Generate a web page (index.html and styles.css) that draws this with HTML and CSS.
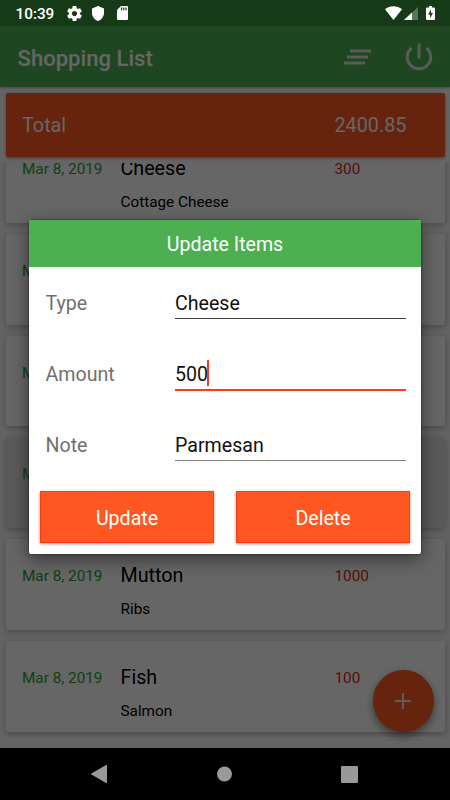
FILE: index.html
```
<!DOCTYPE html>
<html lang="en">
<head>
    <meta charset="UTF-8">
    <meta name="viewport" content="width=device-width, initial-scale=1.0">
    <title>Shopping List</title>
    <link rel="stylesheet" href="styles.css">
</head>
<body>
    <div class="app">
        <div class="status-space"></div>
        <header class="toolbar">
            <h1>Shopping List</h1>
            <svg class="clear-icon" width="28" height="16" viewBox="0 0 28 16" fill="#e2e6e2">
                <path d="M6 0.5h21v3H6zM3 6.500h21v3H3zM0 12.500h21v3H0z"/>
            </svg>
            <svg class="power-icon" width="28" height="28" viewBox="0 0 28 28" fill="none" stroke="#e2e6e2" stroke-width="3">
                <path d="M14 0.5v15"/>
                <path d="M6.600 5A11.700 11.700 0 1 0 21.400 5"/>
            </svg>
        </header>
        <div class="total">
            <span class="total-label">Total</span>
            <span>2400.85</span>
        </div>
        <div class="list">
            <div class="item">
                <span class="date">Mar 8, 2019</span>
                <div class="info"><div class="name">Cheese</div><div class="note">Cottage Cheese</div></div>
                <span class="amount">300</span>
            </div>
            <!-- These rows are mostly behind the dialog -->
            <div class="item"><span class="date">Mar 8, 2019</span></div>
            <div class="item"><span class="date">Mar 8, 2019</span></div>
            <div class="item pressed"><span class="date">Mar 8, 2019</span></div>
            <div class="item">
                <span class="date">Mar 8, 2019</span>
                <div class="info"><div class="name">Mutton</div><div class="note">Ribs</div></div>
                <span class="amount">1000</span>
            </div>
            <div class="item">
                <span class="date">Mar 8, 2019</span>
                <div class="info"><div class="name">Fish</div><div class="note">Salmon</div></div>
                <span class="amount">100</span>
            </div>
        </div>
        <div class="fab">
            <svg width="16" height="16" viewBox="0 0 16 16" stroke="#e2e6e2" stroke-width="2">
                <path d="M8 0v16M0 8h16"/>
            </svg>
        </div>
    </div>

    <div class="overlay">
        <div class="status-bar">
            <span class="clock">10:39</span>
            <svg class="gear" width="15" height="15" viewBox="2 2 20 20" fill="#fff">
                <path d="M19.43 12.98c.04-.32.07-.64.07-.98s-.03-.66-.07-.98l2.11-1.65c.19-.15.24-.42.12-.64l-2-3.46c-.12-.22-.39-.3-.61-.22l-2.49 1c-.52-.4-1.08-.73-1.69-.98l-.38-2.65C14.46 2.18 14.25 2 14 2h-4c-.25 0-.46.18-.49.42l-.38 2.65c-.61.25-1.17.59-1.69.98l-2.49-1c-.23-.09-.49 0-.61.22l-2 3.46c-.13.22-.07.49.12.64l2.11 1.65c-.04.32-.07.65-.07.98s.03.66.07.98l-2.11 1.65c-.19.15-.24.42-.12.64l2 3.46c.12.22.39.3.61.22l2.49-1c.52.4 1.08.73 1.69.98l.38 2.65c.03.24.24.42.49.42h4c.25 0 .46-.18.49-.42l.38-2.65c.61-.25 1.17-.59 1.69-.98l2.49 1c.23.09.49 0 .61-.22l2-3.46c.12-.22.07-.49-.12-.64l-2.11-1.65zM12 15.5c-1.93 0-3.5-1.57-3.5-3.5s1.57-3.5 3.5-3.5 3.5 1.57 3.5 3.5-1.57 3.5-3.5 3.5z"/>
            </svg>
            <svg class="shield" width="12" height="15" viewBox="0 0 12 15" fill="#fff">
                <path d="M6 0l6 2.400v4.400C12 10.600 9.500 13.900 6 15 2.500 13.900 0 10.600 0 6.800V2.400z"/>
            </svg>
            <svg class="sd" width="11" height="14" viewBox="0 0 11 14">
                <path fill="#fff" d="M4 0h6q1 0 1 1v12q0 1-1 1H1q-1 0-1-1V4z"/>
                <path stroke="#163918" stroke-width="1.200" d="M4.600 1.500v2.700M6.800 1.500v2.700M9 1.500v2.700"/>
            </svg>
            <svg class="wifi" width="17" height="14" viewBox="0 0 17 14" fill="#fff">
                <path d="M8.500 14L0 3.200C4.500-.9 12.500-.9 17 3.200z"/>
            </svg>
            <svg class="signal" width="14" height="13" viewBox="0 0 14 13" fill="#fff">
                <path opacity=".3" d="M14 0v13H0z"/>
                <path d="M8 5.600V13H0z"/>
            </svg>
            <svg class="battery" width="9" height="14" viewBox="0 0 9 14">
                <path fill="#fff" d="M3 0h3v1.400h2q1 0 1 1V13q0 1-1 1H1q-1 0-1-1V2.400q0-1 1-1h2z"/>
                <path fill="#163918" d="M5 3.500L2 8.500h2V12l3-5H5z"/>
            </svg>
        </div>
        <div class="dialog">
            <div class="dialog-title">Update Items</div>
            <div class="field"><label>Type</label><div class="value">Cheese</div></div>
            <div class="field"><label>Amount</label><div class="value focused">500<span class="caret"></span></div></div>
            <div class="field"><label>Note</label><div class="value light">Parmesan</div></div>
            <div class="buttons">
                <button>Update</button>
                <button>Delete</button>
            </div>
        </div>
    </div>

    <nav class="nav-bar">
        <svg width="16" height="18" viewBox="0 0 16 18" fill="#999"><path d="M15 0q1-.3 1 .8v16.400q0 1.100-1 .8L.4 9.600q-.8-.6 0-1.200z"/></svg>
        <svg width="16" height="16" viewBox="0 0 16 16" fill="#999"><circle cx="8.500" cy="8" r="7.500"/></svg>
        <svg width="17" height="17" viewBox="0 0 17 17" fill="#999"><rect width="17" height="17" rx="1"/></svg>
    </nav>
</body>
</html>
```
FILE: styles.css
```
* {
    box-sizing: border-box;
}
body {
    margin: 0;
    height: 800px;
    display: flex;
    flex-direction: column;
    position: relative;
    overflow: hidden;
    background: #000;
    font-family: Roboto, sans-serif;
}
svg {
    display: block;
    flex: none;
}
.app {
    height: 748px;
    background: #fafafa;
    display: flex;
    flex-direction: column;
}
.status-space {
    height: 26px;
    flex: none;
    background: #388e3c;
}
.toolbar {
    height: 61px;
    flex: none;
    display: flex;
    align-items: center;
    padding: 0 17px 0 17.5px;
    background: #4caf50;
    color: #fff;
    box-shadow: 0 1px 2px rgba(0, 0, 0, 0.3);
}
.toolbar h1 {
    flex: 1;
    margin: 2px 0 0;
    font-size: 22.1px;
    font-weight: 500;
}
.clear-icon {
    margin-right: 33px;
}
.total {
    height: 64px;
    flex: none;
    display: flex;
    align-items: center;
    margin: 6px 5.5px;
    padding-left: 16.5px;
    border-radius: 2px;
    background: #ff5722;
    color: #fff;
    font-size: 19.8px;
    box-shadow: 0 1px 3px rgba(0, 0, 0, 0.4);
}
.total-label {
    width: 312.5px;
}
.list {
    height: 574px;
    flex: none;
    overflow: hidden;
    background: #f6f6f6;
    padding: 0 5.5px;
}
.item {
    height: 90.7px;
    margin-bottom: 11.1px;
    display: flex;
    padding: 25px 0 0 16.5px;
    border-radius: 3px;
    background: #fff;
    box-shadow: 0 2px 6px rgba(0, 0, 0, 0.25);
}
.item:first-child {
    margin-top: -30.9px;
}
.pressed {
    background: #e2e2e2;
}
.date {
    width: 98.5px;
    padding-top: 2px;
    color: #2e9c33;
    font-size: 15.3px;
    line-height: 20px;
}
.info {
    width: 214px;
    color: #000;
}
.name {
    font-size: 19.7px;
    line-height: 23px;
}
.note {
    margin-top: 12px;
    font-size: 15.3px;
    line-height: 20px;
}
.amount {
    padding-top: 2px;
    color: #e01d0c;
    font-size: 15.3px;
    line-height: 20px;
}
.fab {
    position: absolute;
    left: 372.5px;
    top: 670px;
    width: 61.5px;
    height: 61.5px;
    display: flex;
    align-items: center;
    justify-content: center;
    border-radius: 50%;
    background: #ff5722;
    box-shadow: 0 4px 9px rgba(0, 0, 0, 0.45);
}
.overlay {
    position: absolute;
    top: 0;
    left: 0;
    width: 450px;
    height: 748px;
    display: flex;
    flex-direction: column;
    align-items: center;
    background: rgba(0, 0, 0, 0.6);
}
.status-bar {
    width: 100%;
    height: 26px;
    display: flex;
    align-items: center;
    padding: 0 15.5px;
    color: #fff;
}
.clock {
    width: 51.5px;
    padding-top: 2px;
    font-size: 15.3px;
    font-weight: 500;
}
.shield {
    margin-left: 10px;
}
.sd {
    margin-left: 13px;
}
.wifi {
    margin-left: auto;
}
.signal {
    margin-left: 2px;
}
.battery {
    margin-left: 8px;
}
.dialog {
    width: 392px;
    height: 334.5px;
    margin-top: 193.5px;
    background: #fff;
    border-radius: 2px;
    box-shadow: 0 5px 18px rgba(0, 0, 0, 0.5), 0 0 2px rgba(0, 0, 0, 0.6);
}
.dialog-title {
    height: 47.5px;
    line-height: 50px;
    text-align: center;
    background: #4caf50;
    color: #fff;
    font-size: 19.6px;
}
.field {
    display: flex;
    height: 71px;
    padding: 20.5px 15px 0 16.5px;
    font-size: 19.6px;
    line-height: 31px;
}
.field label {
    width: 129.5px;
    color: #707070;
}
.value {
    flex: 1;
    height: 31px;
    border-bottom: 1px solid #3f3f3f;
    color: #111;
}
.focused {
    height: 32px;
    border-bottom: 2px solid #fb3a1c;
}
.light {
    border-color: #808080;
}
.caret {
    display: inline-block;
    width: 2px;
    height: 26px;
    margin: 0 0 -5px -1px;
    vertical-align: baseline;
    background: #fb3a1c;
}
.buttons {
    display: flex;
    justify-content: space-between;
    padding: 10.5px 11px 0;
}
.buttons button {
    width: 174px;
    height: 52.5px;
    padding: 3px 0 0;
    border: 1px solid #ff3a12;
    background: #ff5722;
    color: #fff;
    font-family: Roboto, sans-serif;
    font-size: 19.6px;
    box-shadow: 0 1px 3px rgba(0, 0, 0, 0.4);
}
.nav-bar {
    height: 52px;
    display: flex;
    align-items: center;
    justify-content: space-between;
    padding: 0 92.5px 0 91px;
}
```
